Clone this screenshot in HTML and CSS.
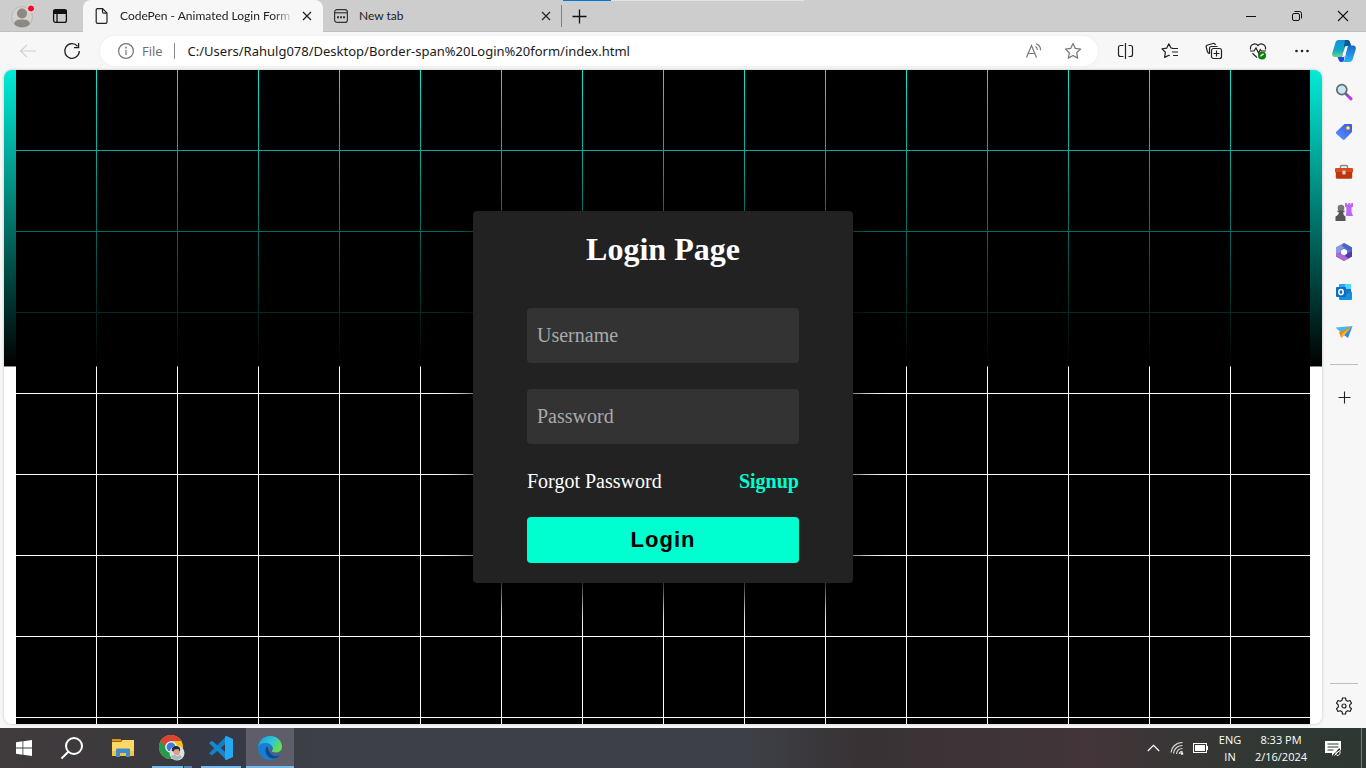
FILE: index.html
```html
<!DOCTYPE html>
<html lang="en">
<head>
<meta charset="utf-8">
<title>CodePen - Animated Login Form</title>
<link rel="stylesheet" href="styles.css">
</head>
<body>
<div class="desktop">
  <header class="tabstrip">
    <button class="profile" aria-label="Profile">
      <svg width="26" height="24" viewBox="0 0 26 24"><circle cx="12" cy="13" r="10.500" fill="#d4d1cd" stroke="#bdb9b4" stroke-width="1"/><circle cx="12" cy="9.500" r="5" fill="#8c8883"/><path d="M4 20c1-4 4-4.500 8-4.500s7 .5 8 4.500c-2 2.200-5 3.300-8 3.300S6 22.200 4 20z" fill="#8c8883"/><circle cx="21" cy="4.500" r="3.600" fill="#e81123" stroke="#e6e6e6"/></svg>
    </button>
    <button class="workspaces" aria-label="Tab actions">
      <svg width="16" height="16" viewBox="0 0 16 16" fill="none" stroke="#111" stroke-width="1.300"><rect x="1.600" y="1.600" width="12.800" height="12.800" rx="2"/><path d="M2 2.500h12v2.800H2z" fill="#111"/><path d="M5 5v9"/></svg>
    </button>
    <div class="tab tab-active">
      <svg width="14" height="18" viewBox="0 0 14 18" fill="none" stroke="#222" stroke-width="1.200"><path d="M2.500 1.600h5l4.500 4.500v9a1.300 1.300 0 0 1-1.300 1.300H2.500a1.300 1.300 0 0 1-1.300-1.300V2.900a1.300 1.300 0 0 1 1.300-1.300z"/><path d="M7.500 1.600v3.300a1.200 1.200 0 0 0 1.200 1.200H12"/></svg>
      <span class="tab-title tab-title-fade">CodePen - Animated Login Form</span>
      <button class="tab-close" aria-label="Close tab"><svg width="10" height="10" viewBox="0 0 10 10" stroke="#222" stroke-width="1.300"><path d="M1 1l8 8M9 1l-8 8"/></svg></button>
    </div>
    <div class="tab tab-idle">
      <svg width="16" height="16" viewBox="0 0 16 16" fill="none" stroke="#333" stroke-width="1.200"><rect x="1.600" y="1.600" width="12.800" height="12.800" rx="2.500"/><path d="M2 4.800h12"/><path d="M4 9.200h2M7 9.200h2M10 9.200h2" stroke-width="2"/></svg>
      <span class="tab-title">New tab</span>
      <button class="tab-close" aria-label="Close tab"><svg width="10" height="10" viewBox="0 0 10 10" stroke="#222" stroke-width="1.200"><path d="M1 1l8 8M9 1l-8 8"/></svg></button>
    </div>
    <button class="new-tab" aria-label="New tab"><svg width="15" height="15" viewBox="0 0 15 15" stroke="#111" stroke-width="1.300"><path d="M7.500 0.500v14M0.500 7.500h14"/></svg></button>
    <div class="progress"></div>
    <div class="window-controls">
      <button aria-label="Minimize"><svg width="12" height="12" viewBox="0 0 12 12" stroke="#111"><path d="M1 6.500h10"/></svg></button>
      <button aria-label="Restore"><svg width="12" height="12" viewBox="0 0 12 12" fill="none" stroke="#111"><rect x="1.500" y="3.500" width="7" height="7" rx="1.500"/><path d="M3.500 1.500h5a2 2 0 0 1 2 2v5"/></svg></button>
      <button aria-label="Close window"><svg width="12" height="12" viewBox="0 0 12 12" stroke="#111" stroke-width="1.100"><path d="M1 1l10 10M11 1L1 11"/></svg></button>
    </div>
  </header>

  <nav class="toolbar" aria-label="Browser toolbar">
    <button class="tool" aria-label="Back"><svg width="18" height="14" viewBox="0 0 18 14" fill="none" stroke="#cfcfcf" stroke-width="1.100"><path d="M17 7H1.500M8 .8L1.500 7 8 13.200"/></svg></button>
    <button class="tool" aria-label="Refresh"><svg width="18" height="18" viewBox="0 0 18 18" fill="none" stroke="#222" stroke-width="1.300"><path d="M16.300 9A7.300 7.300 0 1 1 14.500 4.200"/><path d="M15.600 1v4.600H11"/></svg></button>
    <div class="address">
      <svg width="18" height="18" viewBox="0 0 18 18" fill="none" stroke="#757575" stroke-width="1.200"><circle cx="9" cy="9" r="7.400"/><path d="M9 8v5"/><path d="M9 4.800v1.700" stroke-width="1.600"/></svg>
      <span class="scheme">File</span>
      <input class="url" type="text" aria-label="Address" value="C:/Users/Rahulg078/Desktop/Border-span%20Login%20form/index.html">
      <button class="address-tool" aria-label="Read aloud"><svg width="18" height="18" viewBox="0 0 18 18" fill="none" stroke="#777" stroke-width="1.200"><path d="M2.500 15.500L7.500 3.500l5 12M4.300 11.500h6.400M11.500 4.500a4 4 0 0 1 1.800 3.500M12 1.800a6.500 6.500 0 0 1 4.500 6.500"/></svg></button>
      <button class="address-tool" aria-label="Add to favorites"><svg width="18" height="18" viewBox="0 0 18 18" fill="none" stroke="#777" stroke-width="1.200" stroke-linejoin="round"><path d="M9 1.500l2.300 4.900 5.300.7-3.900 3.700 1 5.300L9 13.500l-4.700 2.600 1-5.300L1.400 7.100l5.300-.7z"/></svg></button>
    </div>
    <button class="tool" aria-label="Split screen"><svg width="18" height="18" viewBox="0 0 18 18" fill="none" stroke="#222" stroke-width="1.200"><path d="M6.500 3.500h-3a2 2 0 0 0-2 2v7a2 2 0 0 0 2 2h3M11.500 3.500h2a2 2 0 0 1 2 2v7a2 2 0 0 1-2 2h-2M8.500 1v16"/></svg></button>
    <button class="tool" aria-label="Favorites"><svg width="18" height="18" viewBox="0 0 18 18" fill="none" stroke="#222" stroke-width="1.200" stroke-linejoin="round"><path d="M11.500 6.200L10 6 7.800 1.800 5.700 6.200 1 6.900l3.400 3.300-.8 5.200 4.300-2.200.8.500M11 6.500h6M11 10h6M12 13.500h5"/></svg></button>
    <button class="tool" aria-label="Collections"><svg width="18" height="18" viewBox="0 0 18 18" fill="none" stroke="#222" stroke-width="1.200"><rect x="6.500" y="6.500" width="10" height="10" rx="2"/><path d="M11.500 8.500v6M8.500 11.500h6M4.500 11.500A3 3 0 0 1 2.500 9.700L1.300 5.500A2 2 0 0 1 2.600 3L8 1.500A2 2 0 0 1 10.500 3M4.500 12V6.500a2 2 0 0 1 2-2h6"/></svg></button>
    <button class="tool" aria-label="Browser essentials"><svg width="18" height="18" viewBox="0 0 18 18" fill="none" stroke="#222" stroke-width="1.200"><path d="M1.600 7.500C.5 3.300 5.800-.2 9 3.500c3.200-3.700 8.500-.2 7.400 4M1 9h4l2-3 2.500 5 1.800-3.500L12.500 9H17M3.500 11.200L8 15.600"/><circle cx="13" cy="13.500" r="4" fill="#107c10" stroke="none"/><path d="M11.500 14.300l3-2.600" stroke="#fff" stroke-width="1.400"/></svg></button>
    <button class="tool" aria-label="Settings and more"><svg width="16" height="4" viewBox="0 0 16 4" fill="#222"><circle cx="2.500" cy="2" r="1.300"/><circle cx="8" cy="2" r="1.300"/><circle cx="13.500" cy="2" r="1.300"/></svg></button>
    <button class="tool tool-copilot" aria-label="Copilot"><svg width="24" height="24" viewBox="0 0 24 24">
      <defs><linearGradient id="cpA" x1="0" y1="0" x2="0" y2="1"><stop offset="0" stop-color="#1191e3"/><stop offset=".6" stop-color="#13a9c0"/><stop offset="1" stop-color="#65d782"/></linearGradient><linearGradient id="cpB" x1="0" y1="0" x2="0" y2="1"><stop offset="0" stop-color="#1768c5"/><stop offset="1" stop-color="#2bb5fa"/></linearGradient></defs>
      <path d="M6.500 1H15c2 0 2.500 1 3 3l.7 3h-4L10 16c-.6 1.200-1.500 2-3 2H3C.5 18-.3 16 .3 14L3.500 3.500C4 2 5 1 6.500 1z" fill="url(#cpA)"/>
      <path d="M13 1h2.500c1.500 0 2.300 1 2.700 2.500L19 7h-4.500c-1.500 0-2.200.7-2.700 2z" fill="#07588f"/>
      <path d="M16 6.500h5c2.600 0 3.300 2 2.700 4L21 19.500c-.5 2-1.700 3.500-3.500 3.500H10c2 0 2.500-2 3-4l2-10c.2-1 .3-1.800 1-2.500z" fill="url(#cpB)"/>
      <path d="M5.500 18H7c2 0 2.800-1 3.300-2.500L12.500 17l-.5 4c-.3 1.300-1 2-2 2-2 0-2.800-.7-3.300-2.300z" fill="#164ddd"/>
      <path d="M14.500 7H16l-3 9.500c-.4 1-1.200 1.500-2.300 1.500H8.500c1 0 1.700-.7 2-1.700L12.700 9c.3-1.300.8-2 1.800-2z" fill="#f7f7f7"/></svg></button>
  </nav>

  <div class="workarea">
    <main class="page">
      <form class="login">
        <h1 class="login-title">Login Page</h1>
        <input class="field" type="text" placeholder="Username" aria-label="Username">
        <input class="field" type="password" placeholder="Password" aria-label="Password">
        <div class="links"><a class="link" href="#forgot">Forgot Password</a><a class="link link-signup" href="#signup">Signup</a></div>
        <button class="submit" type="button">Login</button>
      </form>
    </main>
    <aside class="sidebar" aria-label="Sidebar">
      <button class="side" aria-label="Search"><svg width="18" height="18" viewBox="0 0 18 18"><path d="M11.500 11.500l4.500 4.300" stroke="#b43bf0" stroke-width="3" stroke-linecap="round"/><path d="M10 10l2.500 2.300" stroke="#666" stroke-width="1.800"/><circle cx="6.800" cy="6.600" r="5" fill="#c4e6fb" stroke="#696969" stroke-width="1.700"/></svg></button>
      <button class="side" aria-label="Shopping"><svg width="18" height="18" viewBox="0 0 18 18"><defs><linearGradient id="tag" x1="1" y1="0" x2="0" y2="1"><stop offset="0" stop-color="#3455e8"/><stop offset="1" stop-color="#5c96ff"/></linearGradient></defs><path d="M9.500 1h6.200c.8 0 1.300.5 1.300 1.300V9L9.700 16.500c-.6.600-1.300.6-2 0L1.300 10.700c-.6-.6-.6-1.200 0-1.900z" fill="url(#tag)"/><circle cx="13" cy="5" r="1.700" fill="#fff3a0" stroke="#eeb422"/></svg></button>
      <button class="side" aria-label="Tools"><svg width="18" height="18" viewBox="0 0 18 18"><path d="M5.500 6V3.500c0-.6.400-1 1-1h5c.6 0 1 .4 1 1V6" fill="none" stroke="#888" stroke-width="1.400"/><rect y="5" width="18" height="4.500" rx="1" fill="#d84b1c"/><path d="M.8 9h16.400v5.500a1.300 1.300 0 0 1-1.300 1.300H2.100a1.300 1.300 0 0 1-1.300-1.300z" fill="#bf360d"/><rect x="7.300" y="7.500" width="3.400" height="4" rx="1" fill="#c8d2d6"/></svg></button>
      <button class="side" aria-label="Games"><svg width="18" height="18" viewBox="0 0 18 18"><path d="M10 0h2v1.500h1.300V0h2v1.500h.9V0H18v3.500l-1.500 1V9l1.500 4h-7L11.500 4.500 10 3.500z" fill="#bd64f5"/><circle cx="6" cy="5" r="3.300" fill="#777"/><path d="M2.500 7.500h7v1.800H8.200c0 2 .8 3.500 2.300 4.200V18H.5v-4.500C2.500 12.500 4 11.300 4 9.300H2.500z" fill="#555"/></svg></button>
      <button class="side" aria-label="Microsoft 365"><svg width="18" height="18" viewBox="0 0 18 18"><path d="M9 0l8 4.500v9L9 18l-8-4.500v-9z" fill="#6f6bd6"/><path d="M9 0L1 4.500v6.500L6 9V6.500L12 3z" fill="#8a9ae6"/><path d="M9 0l8 4.500V9l-4-2.500L6.500 3z" fill="#4066c9"/><path d="M17 8v5.500l-4 2.300L10 12l3-2z" fill="#4f3aa6"/><path d="M1 10v3.500L9 18l4.500-2.500L5.500 11z" fill="#b268d2"/><path d="M9 5.800l3 1.700v3.200l-3 1.700-3-1.700V7.500z" fill="#fff"/></svg></button>
      <button class="side" aria-label="Outlook"><svg width="18" height="18" viewBox="0 0 18 18"><path d="M4 1h12v15H4z" fill="#28a8ea"/><path d="M10 1h6v5h-6z" fill="#50d9ff"/><path d="M4 5h6v6H4z" fill="#0364b8"/><path d="M10 6h6v3l-5 3h-1z" fill="#1a76c4"/><path d="M17 8.500V16a1 1 0 0 1-1 1H5a1 1 0 0 1-1-1v-3h6z" fill="#1490df"/><rect x="1" y="4" width="10" height="10" rx="1" fill="#0f6cc4"/><ellipse cx="6" cy="9" rx="2.200" ry="2.600" fill="none" stroke="#fff" stroke-width="1.500"/></svg></button>
      <button class="side" aria-label="Drop"><svg width="18" height="18" viewBox="0 0 18 18"><path d="M.5 4.500L17.500 3 7.500 11z" fill="#4bb9ef"/><path d="M17.500 3L4 9.500l2 5z" fill="#e58b17"/><path d="M17.500 3L7.500 11l5.500 4z" fill="#2a8ce8"/><path d="M17.500 3L6.500 11v4.500l2.500-3z" fill="#f9b52b"/></svg></button>
      <hr class="side-rule">
      <button class="side" aria-label="Customize"><svg width="13" height="13" viewBox="0 0 13 13" stroke="#222" stroke-width="1.100"><path d="M6.500.5v12M.5 6.500h12"/></svg></button>
      <hr class="side-rule side-rule-end">
      <button class="side" aria-label="Sidebar settings"><svg width="18" height="18" viewBox="0 0 18 18" fill="none" stroke="#222" stroke-width="1.200" stroke-linejoin="round"><path d="M7.500 1h3l.5 2.300 1.700 1 2.300-.8 1.500 2.700-1.800 1.700v2.200l1.800 1.700-1.500 2.700-2.300-.8-1.700 1-.5 2.300h-3L7 14.700l-1.700-1-2.300.8-1.500-2.700 1.800-1.700V7.900L1.500 6.200 3 3.500l2.300.8 1.700-1z"/><circle cx="9" cy="9" r="2"/></svg></button>
    </aside>
  </div>

  <footer class="taskbar">
    <button class="task" aria-label="Start"><svg width="16" height="16" viewBox="0 0 16 16" fill="#fff"><path d="M0 2.200L6.500 1.300v6.200H0zM7.300 1.200L16 0v7.500H7.300zM0 8.400h6.500v6.300L0 13.800zM7.300 8.400H16V16l-8.700-1.200z"/></svg></button>
    <button class="task" aria-label="Search"><svg width="24" height="24" viewBox="0 0 24 24" fill="none" stroke="#fff" stroke-width="2"><circle cx="14" cy="10" r="8"/><path d="M8.300 15.700L1.500 22.500"/></svg></button>
    <div class="apps">
      <button class="task" aria-label="File Explorer"><svg width="22" height="20" viewBox="0 0 22 20"><path d="M0 1h8.500L10 3.500H0z" fill="#dd9a0b"/><path d="M0 4h9l1.500-2H22v15H0z" fill="#ffd764"/><path d="M0 13h22v5H0z" fill="#f5c342"/><path d="M4 19v-7c0-1 .5-1.500 1.500-1.500h11c1 0 1.500.5 1.500 1.500v7h-4v-4H8v4z" fill="#3d8ed0"/></svg></button>
      <button class="task task-open task-multi" aria-label="Chrome"><svg width="26" height="26" viewBox="0 0 26 26"><circle cx="12" cy="12" r="12" fill="#f9bd18"/><path d="M1.600 6A12 12 0 0 1 22.400 6H12L7 15z" fill="#dd4335"/><path d="M1.600 6A12 12 0 0 0 12 24l5-9h-8z" fill="#259a4b"/><circle cx="12" cy="12" r="5.800" fill="#fff"/><circle cx="12" cy="12" r="4.500" fill="#3d7ce5"/><circle cx="18" cy="18" r="7.500" fill="#d9e2e3"/><path d="M14 12.500c2-2.500 6-2 7 1.500v3l-1 3h-4l-2-3z" fill="#d7a286"/><path d="M13 16c-1-4 3-6 6-4.500 2 .5 3 3 1.500 5l-1-2.500-4 .5-1 2z" fill="#252932"/><path d="M12 21c2-1 4-1.500 6 0l3-1 2 2c-3 4-9 4-11-1z" fill="#a9b9bc"/></svg></button>
      <button class="task task-open" aria-label="Visual Studio Code"><svg width="24" height="24" viewBox="0 0 24 24"><path d="M17.500 0v7L3 19.500l-3-2.300L17.500 0z" fill="#1280c5"/><path d="M0 7l3-2.300L17.500 17v7L0 7z" fill="#1687cf"/><path d="M17.500 0L24 3v18l-6.500 3c-.8 0-1.500-.5-1.500-1.500V1.500c0-1 .7-1.500 1.500-1.500z" fill="#25a7f2"/></svg></button>
      <button class="task task-open task-current" aria-label="Microsoft Edge"><svg width="24" height="24" viewBox="0 0 24 24"><defs><linearGradient id="edgeTop" x1="0" y1="0" x2="1" y2=".5"><stop offset="0" stop-color="#1a9bdd"/><stop offset=".6" stop-color="#34c5d6"/><stop offset="1" stop-color="#68dc50"/></linearGradient></defs><circle cx="12" cy="12" r="12" fill="#197dd0"/><path d="M.2 10.500C1.500 4 6 0 12 0c7 0 12 5 12 10.500 0 4-3 6-6.500 6-3 0-4.300-1-3.500-2 .8-1 1-2 .5-3.500C13.500 8.500 11 7 7.500 7 4 7 1.500 8.500.2 10.500z" fill="url(#edgeTop)"/><path d="M9.500 10c-4 3-2 10 3 12 3 1.200 7 .5 9.500-3-6 3-11-1-12.500-9z" fill="#114a8b"/><path d="M14.200 11.500c.6 1.500.4 2.200-.3 3-.8 1 .6 2.300 3.600 2.300 2.500 0 4.500-.8 6-2.600-.3 1.500-.8 3-1.500 4.300-4.500 1.500-9.700-.5-10.200-4.500 0-1.300.5-2.300 1.200-2.800z" fill="#5e5e6b"/></svg></button>
    </div>
    <div class="tray">
      <button class="tray-item" aria-label="Show hidden icons"><svg width="13" height="8" viewBox="0 0 13 8" fill="none" stroke="#fff" stroke-width="1.200"><path d="M.8 7l5.700-5.700L12.200 7"/></svg></button>
      <button class="tray-item" aria-label="Network"><svg width="14" height="14" viewBox="0 0 14 14" fill="none" stroke="#ddd" stroke-width="1.200"><path d="M1 11.500C1.500 6 6 1.500 12.500 1.500M3.500 12.500c.5-4.500 4-8 9-8M6.500 13c.3-3 2.500-5.500 6-5.500M9.300 13c.2-1.500 1.200-2.700 3.200-2.700"/><circle cx="12" cy="12.500" r="1.300" fill="#fff" stroke="none"/></svg></button>
      <button class="tray-item" aria-label="Battery"><svg width="16" height="10" viewBox="0 0 16 10"><rect x=".5" y=".5" width="13" height="9" fill="none" stroke="#fff"/><path d="M2 2h10v6H2zM14 3h1v4h-1z" fill="#fff"/></svg></button>
      <button class="tray-text tray-lang">ENG<br>IN</button>
      <button class="tray-text tray-clock">8:33 PM<br>2/16/2024</button>
      <button class="tray-note" aria-label="Notifications"><svg width="18" height="17" viewBox="0 0 18 17"><path d="M1 1h16v12h-6l-3 3v-3H1z" fill="#fff"/><path d="M3.500 4h11M3.500 7h11M3.500 10h6" stroke="#303833" stroke-width="1.200"/><path d="M11 15l4-4.500c1 1.800.5 4.500-2 5z" fill="#303833" stroke="#303833" stroke-width="3"/><path d="M10.500 15.500l5-5c1.200 2 .5 5-2.500 5-1.500-1-1.500-2.500 0-4" fill="none" stroke="#fff"/></svg></button>
    </div>
  </footer>
</div>
</body>
</html>
```

FILE: styles.css
```css
* {
  box-sizing: border-box;
}

body {
  margin: 0;
  font-family: "Open Sans", "Noto Sans", sans-serif;
  font-size: 12px;
  color: #222;
}

button {
  display: flex;
  align-items: center;
  justify-content: center;
  flex: none;
  padding: 0;
  border: 0;
  background: none;
  color: inherit;
  font: inherit;
}

svg {
  display: block;
  flex: none;
}

.desktop {
  display: flex;
  flex-direction: column;
  min-height: 100vh;
  background: #f7f7f7;
}

/* Tab strip */
.tabstrip {
  display: flex;
  align-items: stretch;
  height: 32px;
  background: #cdcdcd;
  box-shadow: inset 0 -1px 0 #c0c0c0;
}

.profile {
  width: 44px;
  padding-left: 2px;
}

.workspaces {
  width: 32px;
  margin-right: 7px;
}

.tab {
  display: flex;
  align-items: center;
  gap: 10px;
  width: 240px;
  padding: 0 10px 0 12px;
}

.tab-active {
  gap: 11px;
  border-radius: 8px 8px 0 0;
  background: #f7f7f7;
}

.tab-idle {
  width: 239px;
  padding-left: 10px;
  padding-right: 9px;
  border-right: 1px solid #808080;
  border-image: linear-gradient(transparent 6px, #808080 6px 26px, transparent 26px) 1;
}

.tab-title {
  flex: 1;
  overflow: hidden;
  font-family: Lato, "Open Sans", sans-serif;
  line-height: 18px;
  white-space: nowrap;
}

.tab-title-fade {
  margin-right: -4px;
  -webkit-mask-image: linear-gradient(90deg, #000 88%, transparent);
  mask-image: linear-gradient(90deg, #000 88%, transparent);
}

.tab-close {
  width: 12px;
  height: 20px;
}

.new-tab {
  width: 34px;
}

.progress {
  width: 241px;
  height: 1px;
  margin-left: -33px;
  background: linear-gradient(90deg, #0078d4 48px, #e3e3e3 48px);
}

.window-controls {
  display: flex;
  margin-left: auto;
}

.window-controls button {
  width: 46px;
}

/* Toolbar */
.toolbar {
  display: flex;
  align-items: center;
  height: 38px;
  padding: 0 2px 0 6px;
}

.tool {
  width: 44px;
  height: 36px;
}

.tool-copilot {
  width: 40px;
}

.address {
  display: flex;
  flex: 1;
  align-items: center;
  height: 30px;
  margin: 0 6px;
  padding: 0 5px 0 17px;
  border-radius: 15px;
  background: #fff;
  box-shadow: 0 0 3px #e8e8e8;
}

.scheme {
  margin-left: 7px;
  padding-right: 11px;
  border-right: 1px solid #8a8a8a;
  color: #6d6d6d;
  font-size: 13px;
  line-height: 16px;
}

.url {
  flex: 1;
  min-width: 0;
  margin-left: 13px;
  padding: 0;
  border: 0;
  background: none;
  color: #1a1a1a;
  font: 13px "Noto Sans", sans-serif;
}

.address-tool {
  width: 40px;
  height: 30px;
}

/* Page viewport and sidebar */
.workarea {
  display: flex;
  flex: 1;
}

.page {
  display: grid;
  flex: 1;
  place-items: center;
  margin: 0 0 4px 4px;
  border-radius: 8px;
  background:
    conic-gradient(from 270deg at 80px 80px, #000 0 90deg, transparent 0) 0 0 / 81px 81px content-box,
    linear-gradient(#00ecd8, #000 296px, #888 296px 297px, #fff 297px);
  padding: 0 12px;
  overflow: hidden;
  box-shadow: 0 0 3px #bbb;
}

.sidebar {
  display: flex;
  flex-direction: column;
  align-items: center;
  width: 44px;
  padding: 2px 0;
}

.side {
  width: 40px;
  height: 40px;
}

.side-rule {
  width: 28px;
  height: 1px;
  margin: 12px 0;
  border: 0;
  background: #bdbdbd;
}

.side-rule-end {
  margin: auto 0 2px;
}

/* Login card */
.login {
  display: flex;
  flex-direction: column;
  width: 380px;
  padding: 20px 54px;
  border-radius: 4px;
  background: #222;
  box-shadow: 0 15px 35px #000;
  font-family: "Liberation Serif", serif;
}

.login-title {
  margin: 0 0 40px;
  color: #fff;
  font-size: 32px;
  line-height: 37px;
  text-align: center;
}

.field {
  width: 100%;
  height: 55px;
  margin-bottom: 26px;
  padding: 0 10px;
  border: 0;
  border-radius: 4px;
  background: #333;
  color: #fff;
  font: 20px "Liberation Serif", serif;
}

.field::placeholder {
  color: #aaa;
}

.links {
  display: flex;
  justify-content: space-between;
  margin-bottom: 25px;
  font-size: 20px;
  line-height: 22px;
}

.link {
  color: #fff;
  text-decoration: none;
}

.link-signup {
  color: #00ffd0;
  font-weight: 700;
}

.submit {
  height: 46px;
  border-radius: 4px;
  background: #00ffd0;
  color: #000;
  font: 700 22px "Liberation Sans", sans-serif;
  letter-spacing: 1px;
}

/* Taskbar */
.taskbar {
  display: flex;
  height: 40px;
  background: linear-gradient(90deg, #403b3d, #3c393c 9%, #353846 16%, #3d4046 23%, #3d4046 55%, #383234 63%, #433539 80%, #393636 86%, #303833 93%, #2e3731);
  color: #fff;
}

.task {
  width: 48px;
  height: 40px;
}

.apps {
  display: flex;
  gap: 1px;
  margin-left: 3px;
}

.task-open {
  background: linear-gradient(#76b9ed, #76b9ed) center bottom / 40px 2px no-repeat;
}

.task-multi {
  background-image: linear-gradient(90deg, #76b9ed 31px, #303440 31px 32px, #5385ad 32px);
}

.task-current {
  background-color: #5e5e6b;
  background-size: 100% 2px;
}

.tray {
  display: flex;
  align-items: stretch;
  margin-left: auto;
  margin-right: 4px;
  border-right: 1px solid #777d79;
}

.tray-item {
  width: 24px;
}

.tray-text {
  font-size: 11px;
  line-height: 17px;
  text-align: center;
}

.tray-lang {
  width: 34px;
}

.tray-clock {
  width: 68px;
}

.tray-note {
  width: 36px;
  margin-right: 10px;
}
```
